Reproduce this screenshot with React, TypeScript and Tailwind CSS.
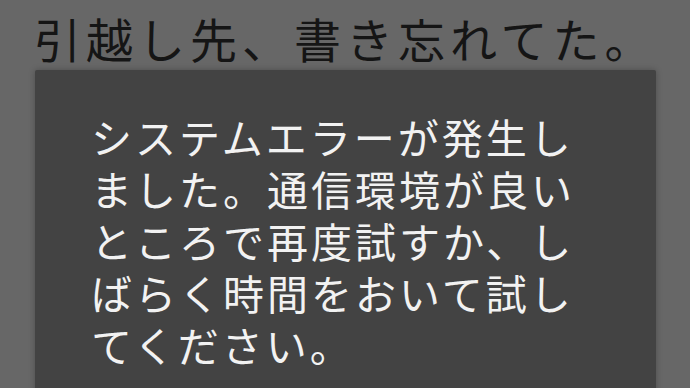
export default function App() {
  const lines = [
    "システムエラーが発生し",
    "ました。通信環境が良い",
    "ところで再度試すか、し",
    "ばらく時間をおいて試し",
    "てください。",
  ];

  return (
    <main
      className="h-[388px] w-[690px] overflow-hidden bg-[#676767]"
      style={{ fontFamily: '"Noto Sans CJK JP", "Noto Sans", sans-serif' }}
    >
      <h1 className="pl-[34px] pt-[14px] text-[47px] leading-[48px] font-normal tracking-[5px] whitespace-nowrap text-[#151515]">
        引越し先、書き忘れてた。
      </h1>
      <div className="ml-[35px] mt-[8px] h-[340px] w-[621px] rounded-[2px] bg-[#434343] pl-[56px] pt-[40px] shadow-[0_0_6px_rgba(0,0,0,0.25)]">
        {lines.map((line) => (
          <p
            key={line}
            className="text-[41px] leading-[52px] tracking-[3px] whitespace-nowrap text-[#f2f2f2]"
          >
            {line}
          </p>
        ))}
      </div>
    </main>
  );
}
